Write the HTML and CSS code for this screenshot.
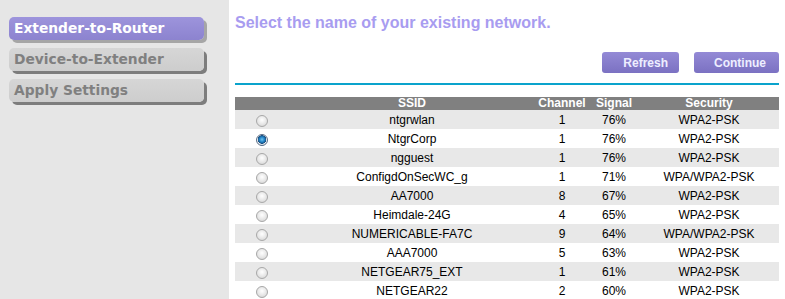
FILE: index.html
```
<!DOCTYPE html>
<html lang="en">
<head>
    <meta charset="UTF-8">
    <title>Extender Setup</title>
    <link rel="stylesheet" href="styles.css">
</head>
<body>
    <div class="side-nav">
        <div class="step-btn active">Extender-to-Router</div>
        <div class="step-btn">Device-to-Extender</div>
        <div class="step-btn">Apply Settings</div>
    </div>

    <div class="main-area">
        <h1 class="page-title">Select the name of your existing network.</h1>

        <div class="action-bar">
            <button class="purple-btn refresh-btn">Refresh</button>
            <button class="purple-btn continue-btn">Continue</button>
        </div>

        <div class="teal-line"></div>

        <table class="net-table">
            <thead>
                <tr>
                    <th class="col-radio"></th>
                    <th class="col-ssid">SSID</th>
                    <th class="col-channel">Channel</th>
                    <th class="col-signal">Signal</th>
                    <th class="col-security">Security</th>
                </tr>
            </thead>
            <tbody>
                <tr><td><span class="radio"></span></td><td>ntgrwlan</td><td>1</td><td>76%</td><td>WPA2-PSK</td></tr>
                <tr><td><span class="radio checked"></span></td><td>NtgrCorp</td><td>1</td><td>76%</td><td>WPA2-PSK</td></tr>
                <tr><td><span class="radio"></span></td><td>ngguest</td><td>1</td><td>76%</td><td>WPA2-PSK</td></tr>
                <tr><td><span class="radio"></span></td><td>ConfigdOnSecWC_g</td><td>1</td><td>71%</td><td>WPA/WPA2-PSK</td></tr>
                <tr><td><span class="radio"></span></td><td>AA7000</td><td>8</td><td>67%</td><td>WPA2-PSK</td></tr>
                <tr><td><span class="radio"></span></td><td>Heimdale-24G</td><td>4</td><td>65%</td><td>WPA2-PSK</td></tr>
                <tr><td><span class="radio"></span></td><td>NUMERICABLE-FA7C</td><td>9</td><td>64%</td><td>WPA/WPA2-PSK</td></tr>
                <tr><td><span class="radio"></span></td><td>AAA7000</td><td>5</td><td>63%</td><td>WPA2-PSK</td></tr>
                <tr><td><span class="radio"></span></td><td>NETGEAR75_EXT</td><td>1</td><td>61%</td><td>WPA2-PSK</td></tr>
                <tr><td><span class="radio"></span></td><td>NETGEAR22</td><td>2</td><td>60%</td><td>WPA2-PSK</td></tr>
            </tbody>
        </table>
    </div>
</body>
</html>
```

FILE: styles.css
```
* {
    margin: 0;
    padding: 0;
    box-sizing: border-box;
}

body {
    background: #ffffff;
    font-family: 'Liberation Sans', Arial, sans-serif;
    display: flex;
    height: 299px;
    overflow: hidden;
}

/* Left step menu */
.side-nav {
    width: 229px;
    flex-shrink: 0;
    background: #e6e6e6;
    padding: 17px 0 0 9px;
}

.step-btn {
    width: 195px;
    height: 23px;
    margin-bottom: 8px;
    padding-left: 5px;
    border-radius: 5px;
    background: linear-gradient(#d6d6d6, #cdcdcd);
    box-shadow: 3px 3px 0 #7d7d7d;
    color: #808080;
    font-family: 'DejaVu Sans', Verdana, sans-serif;
    font-weight: bold;
    font-size: 13.8px;
    line-height: 23px;
}

.step-btn.active {
    background: linear-gradient(#9d94dc, #8c83cf);
    box-shadow: 3px 3px 0 #a6a6a6;
    color: #ffffff;
}

/* Main content */
.main-area {
    flex: 1;
    padding: 0 6px;
}

.page-title {
    margin-top: 14px;
    font-size: 16px;
    line-height: 18px;
    font-weight: bold;
    color: #a89cf0;
}

.action-bar {
    display: flex;
    justify-content: flex-end;
    gap: 15px;
    margin-top: 20px;
}

.purple-btn {
    height: 21px;
    border: none;
    border-radius: 3px;
    background: linear-gradient(#948ad6, #7b71c2);
    color: #eeeeff;
    font-family: 'Liberation Sans', Arial, sans-serif;
    font-weight: bold;
    font-size: 12px;
    text-align: right;
}

.refresh-btn {
    width: 77px;
    padding-right: 11px;
}

.continue-btn {
    width: 85px;
    padding-right: 13px;
}

.teal-line {
    height: 2px;
    margin-top: 10px;
    background: #0aa3cc;
}

/* Network list */
.net-table {
    width: 544px;
    margin-top: 12px;
    border-collapse: collapse;
    table-layout: fixed;
    font-size: 12px;
}

.net-table th {
    height: 13px;
    line-height: 13px;
    background: #808080;
    color: #ffffff;
    font-weight: bold;
    text-align: center;
}

.net-table td {
    height: 19px;
    text-align: center;
    vertical-align: middle;
    color: #000000;
}

.net-table tbody tr:nth-child(odd) {
    background: #e8e8e8;
}

.col-radio { width: 54px; }
.col-ssid { width: 246px; }
.col-channel { width: 54px; }
.col-signal { width: 50px; }
.col-security { width: 140px; }

.radio {
    display: inline-block;
    width: 12px;
    height: 12px;
    margin-top: 2px;
    border-radius: 50%;
    border: 1px solid #a8a8a8;
    background: radial-gradient(circle at 50% 40%, #ffffff 0%, #e4e4e4 60%, #cfcfcf 100%);
    vertical-align: middle;
}

.radio.checked {
    border-color: #5c6e86;
    background: radial-gradient(circle at 50% 45%, #6fc4f2 0%, #1e7fc2 35%, #1b4f80 55%, #e9eef3 60%, #d0d6dd 100%);
}
```
